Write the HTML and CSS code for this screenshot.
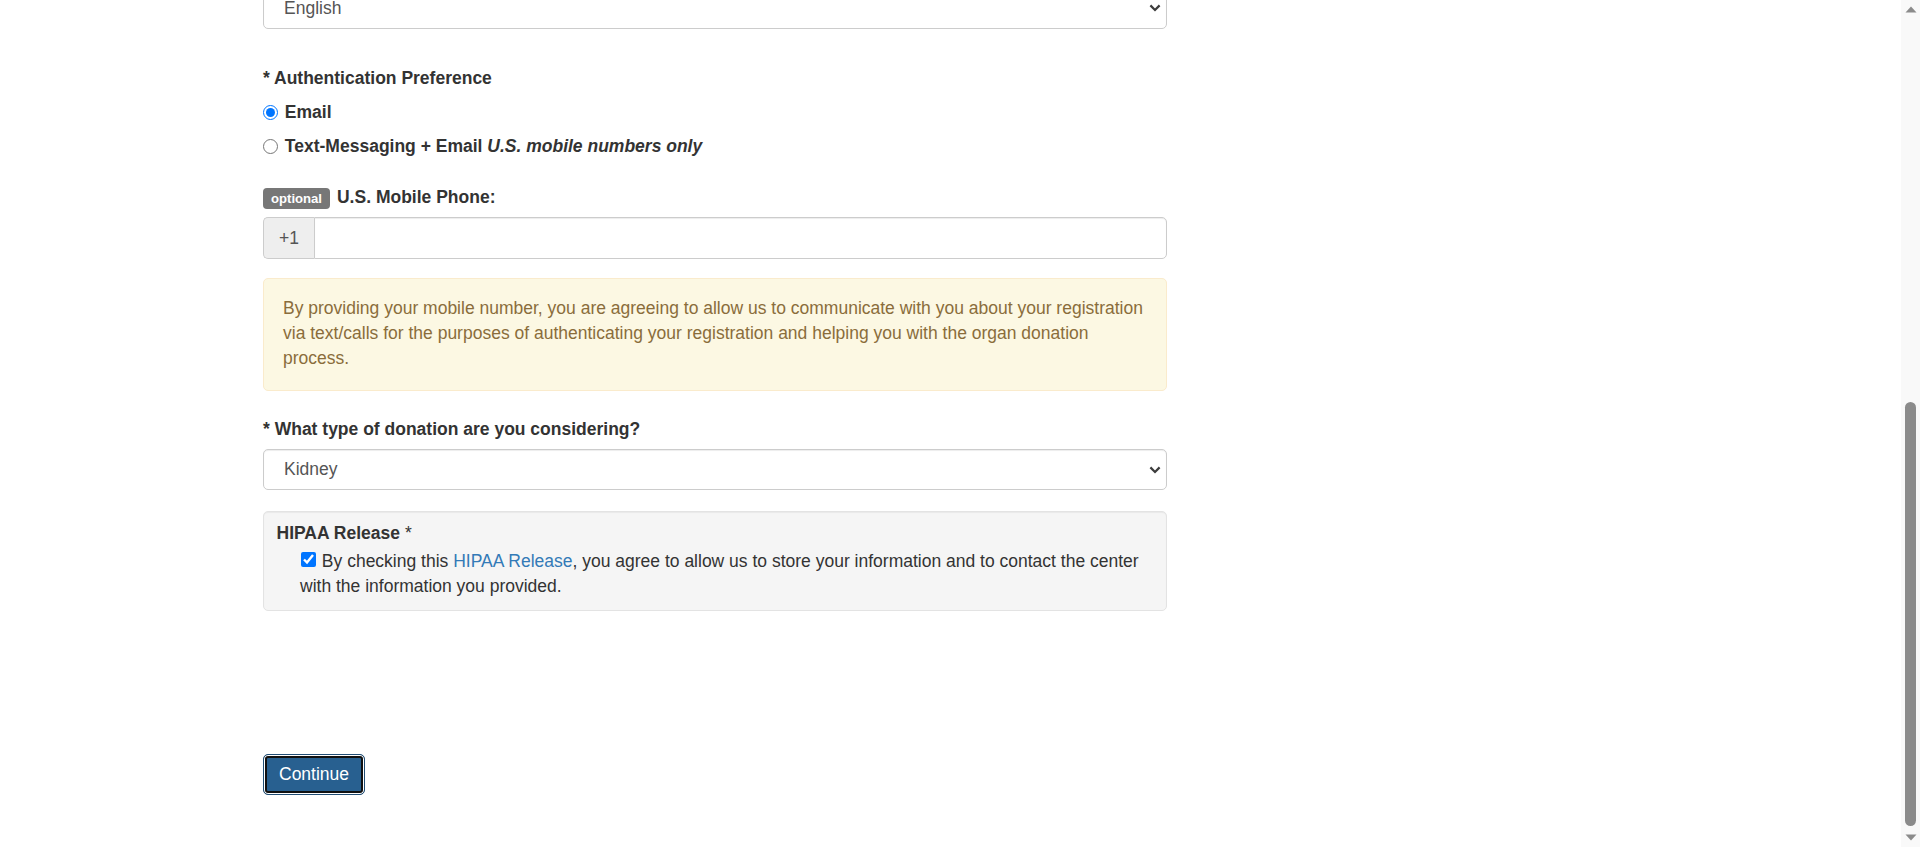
FILE: index.html
```html
<!DOCTYPE html>
<html lang="en">
<head>
<meta charset="utf-8">
<title>Living Donor Registration</title>
<link rel="stylesheet" href="styles.css">
</head>
<body>
<div class="page">
  <form class="form" onsubmit="return false;">
    <h1 class="title">Living Donor Registration</h1>

    <div class="group">
      <label class="label" for="first">* First Name</label>
      <input class="control" id="first" type="text">
    </div>
    <div class="group">
      <label class="label" for="last">* Last Name</label>
      <input class="control" id="last" type="text">
    </div>
    <div class="group">
      <label class="label" for="email">* Email Address</label>
      <input class="control" id="email" type="email">
    </div>
    <div class="group">
      <label class="label" for="email2">* Confirm Email Address</label>
      <input class="control" id="email2" type="email">
    </div>
    <div class="group">
      <label class="label" for="dob">* Date of Birth</label>
      <input class="control" id="dob" type="text">
    </div>
    <div class="group">
      <label class="label" for="zip">* ZIP Code</label>
      <input class="control" id="zip" type="text">
    </div>
    <div class="group">
      <label class="label" for="city">* City</label>
      <input class="control" id="city" type="text">
    </div>

    <div class="group group-lang">
      <label class="label" for="lang">* Preferred Language</label>
      <div class="select-wrap">
        <select class="control select" id="lang">
          <option>English</option>
          <option>Español</option>
        </select>
        <svg class="chevron" viewBox="0 0 12 8" aria-hidden="true"><path d="M1.4 1.4 L6 6 L10.6 1.4" /></svg>
      </div>
    </div>

    <div class="group group-auth">
      <div class="label-line">* Authentication Preference</div>
      <label class="radio"><input type="radio" name="auth" checked> Email</label>
      <label class="radio"><input type="radio" name="auth"> Text-Messaging + Email&nbsp;<em>U.S. mobile numbers only</em></label>
    </div>

    <div class="group group-phone">
      <label class="label phone-label" for="phone"><span class="badge">optional</span><span class="phone-text">U.S. Mobile Phone:</span></label>
      <div class="input-group">
        <span class="addon">+1</span>
        <input class="control group-input" id="phone" type="tel">
      </div>
    </div>

    <div class="alert">By providing your mobile number, you are agreeing to allow us to communicate with you about your registration via text/calls for the purposes of authenticating your registration and helping you with the organ donation process.</div>

    <div class="group group-donation">
      <label class="label" for="donation">* What type of donation are you considering?</label>
      <div class="select-wrap">
        <select class="control select" id="donation">
          <option>Kidney</option>
          <option>Liver</option>
        </select>
        <svg class="chevron" viewBox="0 0 12 8" aria-hidden="true"><path d="M1.4 1.4 L6 6 L10.6 1.4" /></svg>
      </div>
    </div>

    <div class="well">
      <div class="well-title">HIPAA Release <span class="req">*</span></div>
      <div class="consent"><input type="checkbox" class="check" checked> By checking this <a href="#" class="link">HIPAA Release</a>, you agree to allow us to store your information and to contact the center with the information you provided.</div>
    </div>

    <div class="actions">
      <button type="submit" class="btn">Continue</button>
    </div>
  </form>
</div>

<div class="scrollbar" aria-hidden="true">
  <svg class="sb-arrow sb-up" viewBox="0 0 12 7"><path d="M6 0.5 L11.5 6.5 L0.5 6.5 Z" /></svg>
  <div class="sb-track"><div class="sb-thumb"></div></div>
  <svg class="sb-arrow sb-down" viewBox="0 0 12 7"><path d="M0.5 0.5 L11.5 0.5 L6 6.5 Z" /></svg>
</div>

<script src="script.js"></script>
</body>
</html>
```

FILE: styles.css
```css
* {
  box-sizing: border-box;
}

html {
  overflow-y: scroll;
  scrollbar-width: none;
}

body {
  margin: 0;
  background: #fff;
  color: #333;
  font-family: "Liberation Sans", Arial, sans-serif;
  font-size: 17.5px;
  line-height: 25px;
}

/* browser scrollbar (drawn over the page) */
.scrollbar {
  position: fixed;
  top: 0;
  right: 0;
  bottom: 0;
  width: 19px;
  display: flex;
  flex-direction: column;
  align-items: center;
  background: #f9f9f9;
}

.sb-arrow {
  display: block;
  flex-shrink: 0;
  width: 12px;
  height: 7px;
}

.sb-arrow path {
  fill: #8b8b8b;
}

.sb-up {
  margin-top: 6px;
}

.sb-down {
  margin-bottom: 6px;
}

.sb-track {
  flex: 1;
  display: flex;
  flex-direction: column;
  justify-content: flex-end;
  padding-bottom: 8px;
}

.sb-thumb {
  width: 11px;
  height: 424px;
  background: #8b8b8b;
  border-radius: 6px;
}

.page {
  padding: 25px 0 52px 263px;
}

.form {
  width: 904px;
}

.title {
  margin: 0 0 14px;
  font-size: 30px;
  line-height: 37.5px;
  font-weight: 500;
}

.group {
  margin-bottom: 18.75px;
}

.label {
  display: block;
  font-weight: bold;
  margin-bottom: 7.5px;
}

.control {
  display: block;
  width: 100%;
  height: 42px;
  padding: 0 15px;
  font: inherit;
  color: #555;
  background: #fff;
  border: 1px solid #ccc;
  border-radius: 5px;
  box-shadow: inset 0 1px 1px rgba(0, 0, 0, 0.075);
}

.select-wrap {
  position: relative;
}

.select {
  height: 41px;
  padding-left: 20px;
  -webkit-appearance: none;
  appearance: none;
}

.chevron {
  position: absolute;
  right: 6px;
  top: 50%;
  width: 12px;
  height: 8px;
  margin-top: -4px;
  pointer-events: none;
}

.chevron path {
  fill: none;
  stroke: #3c3c3c;
  stroke-width: 2.2;
}

.group-lang {
  margin-bottom: 37px;
}

.label-line {
  font-weight: bold;
}

.radio {
  display: flex;
  align-items: center;
  margin-top: 9px;
  font-weight: bold;
  white-space: pre;
}

.radio input {
  width: 15px;
  height: 15px;
  margin: 0 2px 0 0;
  accent-color: #0075ff;
}

.group-auth {
  margin-bottom: 26px;
}

.phone-label {
  display: flex;
  align-items: center;
}

.badge {
  display: inline-block;
  margin-top: 3px;
  padding: 2.5px 8px 3.5px;
  font-size: 13.125px;
  line-height: 15px;
  font-weight: bold;
  color: #fff;
  background: #777;
  border-radius: 4px;
}

.phone-text {
  margin-left: 7px;
}

.input-group {
  display: flex;
}

.addon {
  display: flex;
  align-items: center;
  justify-content: center;
  width: 51px;
  height: 42px;
  color: #555;
  background: #eee;
  border: 1px solid #ccc;
  border-right: 0;
  border-radius: 5px 0 0 5px;
}

.group-input {
  flex: 1;
  border-radius: 0 5px 5px 0;
}

.group-phone {
  margin-bottom: 19px;
}

.alert {
  margin-bottom: 25.5px;
  padding: 17px 19px 19px;
  color: #8a6d3b;
  background: #fcf8e3;
  border: 1px solid #faebcc;
  border-radius: 5px;
}

.group-donation {
  margin-bottom: 21px;
}

.well {
  padding: 8.5px 12.5px 11.5px;
  background: #f5f5f5;
  border: 1px solid #e3e3e3;
  border-radius: 5px;
  box-shadow: inset 0 1px 1px rgba(0, 0, 0, 0.05);
}

.well-title {
  font-weight: bold;
}

.req {
  font-weight: normal;
}

.consent {
  margin-top: 3px;
  padding-left: 23.5px;
}

.check {
  width: 15px;
  height: 15px;
  margin: 0 1px 0 1px;
  vertical-align: baseline;
  accent-color: #0075ff;
}

.link {
  color: #337ab7;
  text-decoration: none;
}

.actions {
  margin-top: 143px;
}

.btn {
  display: inline-block;
  height: 41px;
  padding: 0 15px;
  font: inherit;
  line-height: 39px;
  color: #fff;
  background: #286090;
  border: 1px solid #204d74;
  border-radius: 5px;
  box-shadow: inset 0 0 0 1px #fff, inset 0 0 0 3px #111;
  cursor: pointer;
}
```

FILE: script.js
```js
window.scrollTo(0, document.documentElement.scrollHeight);
window.addEventListener('load', function () {
  window.scrollTo(0, document.documentElement.scrollHeight);
});
```
